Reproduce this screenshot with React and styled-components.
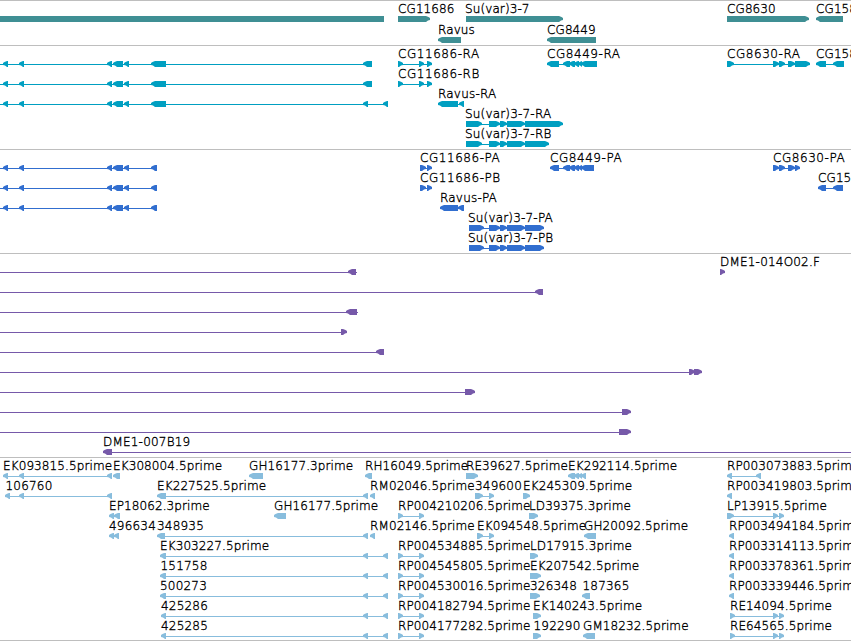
import React from "react";
import styled, { createGlobalStyle } from "styled-components";

const TEAL = "#3f8f94";
const CYAN = "#009fc1";
const BLUE = "#316ecf";
const PURPLE = "#7659a9";
const SKY = "#88bddd";

// left(label, labelX, exons, lineStart, lineEnd) - same for right
const make = (dir) => (label, x, exons, from, to) => ({ dir, label, x, exons, from, to });
const left = make("left");
const right = make("right");
const block = make("block");

const longExons = [[3, 8], [19, 24], [107, 112], [113, 123], [124, 129]];
const longRna = left("", 0, [...longExons, [151, 166], [363, 372]], 0);
const longCds = left("", 0, [...longExons, [151, 157]], 0);
const suRna = [[466, 482], [489, 500], [500, 507], [507, 525]];
const suCds = [[469, 484], [489, 500], [500, 507], [507, 525], [525, 544]];
const cg8449 = [[563, 570], [569, 575], [574, 579], [578, 582]];
const rp = [[398, 403], [419, 424]];
const ek = [[160, 166], [363, 368], [383, 388]];
const re = [[730, 735], [773, 778], [779, 784]];

const tracks = [
  {
    name: "genes", color: TEAL, rowHeight: 21, pad: 2,
    rows: [
      [
        block("", 0, [[0, 384]]),
        right("CG11686", 398, [[398, 430]]),
        right("Su(var)3-7", 465, [[466, 563]]),
        right("CG8630", 727, [[727, 809]]),
        left("CG158", 816, [[816, 843]]),
      ],
      [left("Ravus", 438, [[438, 461]]), left("CG8449", 547, [[547, 596]])],
    ],
  },
  {
    name: "transcripts", color: CYAN, rowHeight: 20, pad: 3,
    rows: [
      [
        longRna,
        right("CG11686-RA", 398, [...rp, [427, 432]]),
        left("CG8449-RA", 547, [[547, 559], ...cg8449, [581, 597]]),
        right("CG8630-RA", 727, [[727, 734], [773, 779], [779, 785], [788, 795], [795, 810]]),
        left("CG158", 816, [[816, 826], [833, 844]]),
      ],
      [longRna, right("CG11686-RB", 398, [...rp, [427, 432]])],
      [
        left("", 0, [...longExons, [151, 166], [363, 368], [383, 388]], 0),
        left("Ravus-RA", 438, [[438, 458], [459, 464]]),
      ],
      [right("Su(var)3-7-RA", 465, [...suRna, [525, 563]])],
      [right("Su(var)3-7-RB", 465, [...suRna, [525, 549]])],
    ],
  },
  {
    name: "proteins", color: BLUE, rowHeight: 20, pad: 3,
    rows: [
      [
        longCds,
        right("CG11686-PA", 420, [[420, 426], [427, 432]]),
        left("CG8449-PA", 550, [[550, 559], ...cg8449, [581, 594]]),
        right("CG8630-PA", 773, [[773, 779], [779, 785], [788, 795], [795, 800]]),
      ],
      [
        longCds,
        right("CG11686-PB", 420, [[420, 426], [427, 432]]),
        left("CG15", 818, [[818, 826], [833, 843]]),
      ],
      [longCds, left("Ravus-PA", 440, [[440, 458], [458, 464]])],
      [right("Su(var)3-7-PA", 468, suCds)],
      [right("Su(var)3-7-PB", 468, suCds)],
    ],
  },
  {
    name: "clones", color: PURPLE, rowHeight: 20, pad: 3,
    rows: [
      [left("", 0, [[348, 356]], 0, 357), right("DME1-014O02.F", 720, [[720, 725]])],
      [left("", 0, [[535, 543]], 0)],
      [left("", 0, [[346, 357]], 0, 358)],
      [right("", 0, [[341, 347]], 0)],
      [left("", 0, [[376, 384]], 0)],
      [right("", 0, [[689, 695], [694, 702]], 0)],
      [right("", 0, [[465, 475]], 0)],
      [right("", 0, [[622, 631]], 0)],
      [right("", 0, [[619, 631]], 0)],
      [left("DME1-007B19", 103, [[103, 112]], 103, 851)],
    ],
  },
  {
    name: "ests", color: SKY, rowHeight: 20, pad: 2,
    rows: [
      [
        left("EK093815.5prime", 3, [[3, 8], [19, 24], [107, 112]]),
        left("EK308004.5prime", 113, [[113, 120]]),
        left("GH16177.3prime", 249, [[249, 263]]),
        left("RH16049.5prime", 365, [[365, 372]]),
        right("RE39627.5prime", 466, [[466, 478]]),
        left("EK292114.5prime", 568, [[568, 575], [574, 579], [578, 582], [581, 586]]),
        left("RP003073883.5prime", 727, [[727, 732], [756, 761]]),
      ],
      [
        left("106760", 5.5, [[5, 10], [19, 24], [107, 112]]),
        left("EK227525.5prime", 157, [[157, 166], [363, 368]]),
        left("RM02046.5prime", 370, [[370, 375]]),
        right("349600", 475, [[475, 483], [489, 494]]),
        right("EK245309.5prime", 523, [[523, 530]]),
        left("RP003419803.5prime", 727, [[727, 732]]),
      ],
      [
        left("EP18062.3prime", 109, [[109, 114], [114, 120]]),
        left("GH16177.5prime", 274, [[274, 286]]),
        right("RP004210206.5prime", 398, rp),
        right("LD39375.3prime", 529, [[529, 538]]),
        right("LP13915.5prime", 727, [[727, 734], [773, 778], [779, 784]]),
      ],
      [
        left("496634", 109, [[109, 114], [114, 119]]),
        left("348935", 157, [[157, 165], [363, 368]]),
        left("RM02146.5prime", 370, [[370, 375]]),
        right("EK094548.5prime", 477, [[477, 483], [489, 494]]),
        left("GH20092.5prime", 584, [[584, 596]]),
        left("RP003494184.5prime", 729, [[729, 734]]),
      ],
      [
        left("EK303227.5prime", 160, ek),
        right("RP004534885.5prime", 398, rp),
        right("LD17915.3prime", 530, [[530, 538]]),
        left("RP003314113.5prime", 729, [[729, 734]]),
      ],
      [
        left("151758", 160.5, ek),
        right("RP004545805.5prime", 398, rp),
        right("EK207542.5prime", 530, [[530, 541]]),
        left("RP003378361.5prime", 729, [[729, 734]]),
      ],
      [
        left("500273", 160, ek),
        right("RP004530016.5prime", 398, rp),
        right("326348", 530, [[530, 540]]),
        left("187365", 582.5, [[582, 590]]),
        left("RP003339446.5prime", 729, [[729, 734]]),
      ],
      [
        left("425286", 161, [[161, 166], ...ek.slice(1)]),
        right("RP004182794.5prime", 398, rp),
        right("EK140243.5prime", 533, [[533, 541]]),
        right("RE14094.5prime", 730, re),
      ],
      [
        left("425285", 161, [[161, 166], ...ek.slice(1)]),
        right("RP004177282.5prime", 398, rp),
        right("192290", 533.5, [[533, 541]]),
        left("GM18232.5prime", 583, [[583, 595]]),
        right("RE64565.5prime", 730, re),
      ],
    ],
  },
];

function tracking(label) {
  if (/^CG\d+-/.test(label)) return 0.55;
  if (/^Su.*-[RP]/.test(label)) return 0.18;
  if (/^(DME|Ravus-|\d+$)/.test(label)) return 0.2;
  return 0.1;
}

function exonPoints(dir, a, b) {
  if (dir === "block") return `${a},0 ${b},0 ${b},6 ${a},6`;
  const head = Math.min(4, b - a);
  const l = dir === "left";
  const tip = l ? a : b;
  const tail = l ? b : a;
  const s = l ? 1 : -1;
  return [
    [tip, 2], [tip + s * 1.5, 1], [tip + s * head, 0], [tail, 0],
    [tail, 6], [tip + s * head, 6], [tip + s * 2, 4.6], [tip, 4],
  ].map((p) => p.join(",")).join(" ");
}

function Feature({ feature }) {
  const { dir, exons } = feature;
  const from = feature.from ?? exons[0][0];
  const to = feature.to ?? exons[exons.length - 1][1];
  return (
    <g>
      {dir !== "block" && <rect x={from} y="3" width={to - from} height="1" />}
      {exons.map(([a, b]) => (
        <polygon key={a} points={exonPoints(dir, a, b)} />
      ))}
    </g>
  );
}

export default function App() {
  return (
    <>
      <GlobalStyle />
      <Browser>
        {tracks.map((track) => (
          <Track key={track.name} $color={track.color} $pad={track.pad}>
            {track.rows.map((row, i) => (
              <Row key={i} $height={track.rowHeight}>
                <Labels>
                  {row.filter((f) => f.label).map((f) => (
                    <Label key={f.label} $tracking={tracking(f.label)} style={{ left: f.x }}>
                      {f.label}
                    </Label>
                  ))}
                </Labels>
                <Glyphs width="851" height="6">
                  {row.map((f, j) => <Feature key={j} feature={f} />)}
                </Glyphs>
              </Row>
            ))}
          </Track>
        ))}
      </Browser>
    </>
  );
}

const GlobalStyle = createGlobalStyle`
  body {
    margin: 0;
    background: #fff;
    overflow: hidden;
  }
`;

const Browser = styled.main`
  width: 851px;
  overflow: hidden;
  border-bottom: 1px solid #bebebe;
  font: 200 12px/14px "DejaVu Sans", sans-serif;
  color: #000;
`;

const Track = styled.section`
  display: flex;
  flex-direction: column;
  border-top: 1px solid #bebebe;
  padding-bottom: ${(p) => p.$pad}px;
  fill: ${(p) => p.$color};
`;

const Row = styled.div`
  display: flex;
  flex-direction: column;
  height: ${(p) => p.$height}px;
`;

const Labels = styled.div`
  position: relative;
  flex: 0 0 15px;
`;

// labels sit at their own coordinate on the sequence and may run into each other
const Label = styled.span`
  position: absolute;
  top: 1px;
  white-space: nowrap;
  letter-spacing: ${(p) => p.$tracking}px;
  -webkit-text-stroke: 0.35px #000;
`;

const Glyphs = styled.svg`
  display: block;
  flex: none;
`;
